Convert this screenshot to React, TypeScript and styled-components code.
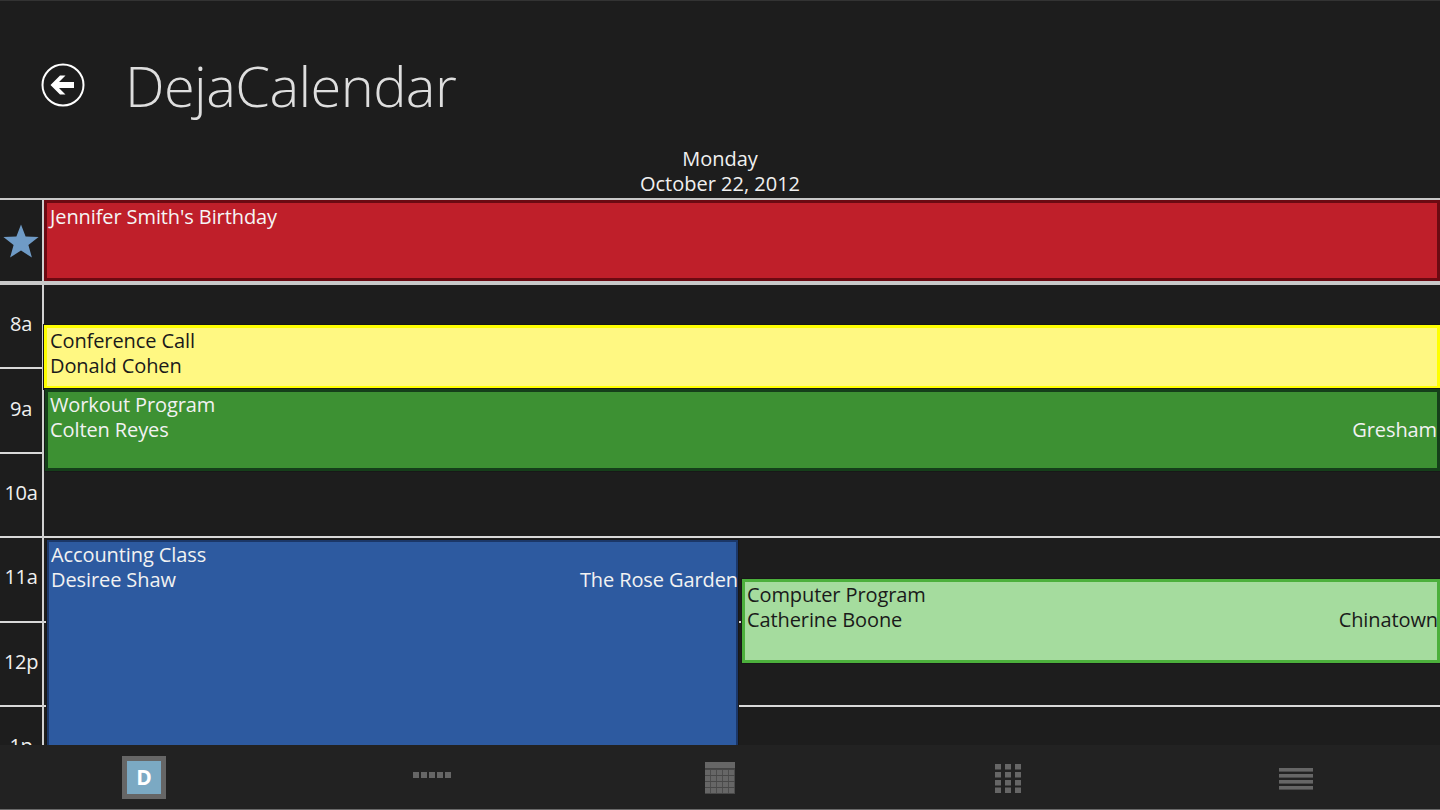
import styled, { createGlobalStyle } from 'styled-components';

const GlobalStyle = createGlobalStyle`
  html, body {
    margin: 0;
    padding: 0;
    background: #1d1d1d;
  }
  * {
    box-sizing: border-box;
  }
`;

const Page = styled.div`
  width: 1440px;
  height: 810px;
  display: flex;
  flex-direction: column;
  overflow: hidden;
  background: #1d1d1d;
  color: #f0f0f0;
  font-family: 'Open Sans', 'Noto Sans', sans-serif;
  border-top: 1px solid #333;
`;

const Header = styled.header`
  height: 144px;
  flex: none;
  display: flex;
  align-items: center;
  gap: 41px;
  padding: 24px 0 0 41px;
  margin-bottom: 1px;
`;

const BackButton = styled.div`
  width: 44px;
  height: 44px;
  color: #fff;
`;

const Title = styled.h1`
  margin: 0 0 0 -1px;
  font-size: 56px;
  font-weight: 300;
  line-height: 70px;
  color: #dedede;
  letter-spacing: -0.6px;
`;

const DateHeading = styled.div`
  height: 52px;
  flex: none;
  text-align: center;
  font-size: 20px;
  line-height: 25px;
  letter-spacing: 0;
  color: #f0f0f0;
`;

const AllDayRow = styled.section`
  height: 87px;
  flex: none;
  display: flex;
  border-top: 2px solid #c8c8c8;
  border-bottom: 4px solid #c8c8c8;
`;

const StarCell = styled.div`
  width: 44px;
  flex: none;
  display: flex;
  align-items: center;
  justify-content: center;
  border-right: 2px solid #d0d0d0;
`;

const AllDaySlot = styled.div`
  flex: 1;
  display: flex;
`;

const TimeGrid = styled.section`
  flex: 1;
  position: relative;
  overflow: hidden;
`;

const HourRow = styled.div`
  height: 84.4px;
  display: flex;
  border-bottom: 2px solid #d8d8d8;
`;

const HourLabel = styled.div`
  width: 44px;
  flex: none;
  display: flex;
  align-items: center;
  justify-content: center;
  border-right: 2px solid #d0d0d0;
  font-size: 20px;
  letter-spacing: -0.3px;
  padding-bottom: 7px;
  margin-bottom: -2px;
  color: #f0f0f0;
`;

const Event = styled.article<{ $bg: string; $edge: string; $ink: string; $weight?: number; $pad?: number }>`
  background: ${({ $bg }) => $bg};
  border: ${({ $weight }) => $weight ?? 3}px solid ${({ $edge }) => $edge};
  color: ${({ $ink }) => $ink};
  font-size: 20px;
  line-height: 25px;
  letter-spacing: -0.1px;
  padding: 0 0 0 ${({ $pad }) => $pad ?? 3}px;
  white-space: nowrap;
`;

const AllDayEvent = styled(Event)`
  flex: 1;
  padding-top: 1px;
`;

const TimedEvent = styled(Event)<{ $top: number; $left: number; $right: number; $height: number }>`
  position: absolute;
  top: ${({ $top }) => $top}px;
  left: ${({ $left }) => $left}px;
  right: ${({ $right }) => $right}px;
  height: ${({ $height }) => $height}px;
  box-shadow: 0 0 0 1px #181818;
`;

const DetailLine = styled.div<{ $bleed?: number }>`
  display: flex;
  justify-content: space-between;
  margin-right: ${({ $bleed }) => -($bleed ?? 0)}px;
`;

const Dock = styled.nav`
  height: 65px;
  flex: none;
  position: relative;
  display: grid;
  grid-template-columns: repeat(5, 1fr);
  align-items: center;
  justify-items: center;
  background: #222;
  border-bottom: 1px solid #6a6a6a;
`;

const DayTile = styled.div`
  width: 44px;
  height: 43px;
  display: flex;
  align-items: center;
  justify-content: center;
  background: #7ba9c3;
  border: 5px solid #666;
  color: #fff;
  font-size: 21px;
  font-weight: 700;
  line-height: 1;
`;

const DockIcon = styled.svg<{ $shift: number }>`
  display: block;
  fill: #666;
  margin-top: ${({ $shift }) => $shift}px;
`;

const events = [
  { title: 'Conference Call', who: 'Donald Cohen', place: '', top: 40, left: 44, right: 0, height: 64, bg: '#fff882', edge: '#ffff00', ink: '#1a1a1a' },
  { title: 'Workout Program', who: 'Colten Reyes', place: 'Gresham', top: 104, left: 45, right: 0, height: 82, bg: '#3d9133', edge: '#153f1a', ink: '#f2f2f2', pad: 2 },
  { title: 'Accounting Class', who: 'Desiree Shaw', place: 'The Rose Garden', top: 255, left: 47, right: 702, height: 207, bg: '#2d5aa0', edge: '#1b3768', ink: '#f2f2f2', weight: 2, pad: 2, bleed: 2 },
  { title: 'Computer Program', who: 'Catherine Boone', place: 'Chinatown', top: 294, left: 742, right: 0, height: 84, bg: '#a5dc9e', edge: '#4cb03c', ink: '#1a1a1a', pad: 2, bleed: 1 },
];

const hours = ['8a', '9a', '10a', '11a', '12p', '1p'];

function BackIcon() {
  return (
    <svg viewBox="0 0 44 44" width="44" height="44">
      <circle cx="22" cy="22" r="20.500" fill="none" stroke="currentColor" strokeWidth="2" />
      <path d="M9.500 22L19 12.500h5.500L18 19h15v6H18l6.500 6.500H19z" fill="currentColor" />
    </svg>
  );
}

function DotsIcon() {
  return (
    <DockIcon $shift={-4} width="38" height="6" viewBox="0 0 38 6">
      {[0, 8, 16, 24, 32].map((x) => (
        <rect key={x} x={x} y="0" width="6" height="6" />
      ))}
    </DockIcon>
  );
}

function MonthIcon() {
  const xs = [0, 6, 12, 18, 24];
  const ys = [8, 14, 20, 26];
  return (
    <DockIcon $shift={2} width="30" height="32" viewBox="0 0 30 32">
      <rect x="0" y="0" width="30" height="6.500" />
      <rect x="0" y="7" width="30" height="25" fill="#484848" />
      {ys.map((y) =>
        xs.map((x) => <rect key={`${x}-${y}`} x={x} y={y} width="5.200" height="5" />),
      )}
    </DockIcon>
  );
}

function YearIcon() {
  const xs = [0, 10, 20];
  const ys = [0, 8, 16, 23.500];
  return (
    <DockIcon $shift={3} width="26" height="29" viewBox="0 0 26 29">
      {ys.map((y) =>
        xs.map((x) => <rect key={`${x}-${y}`} x={x} y={y} width="6" height="5.500" />),
      )}
    </DockIcon>
  );
}

function ListIcon() {
  return (
    <DockIcon $shift={3} width="34" height="22" viewBox="0 0 34 22">
      {[0, 6, 12, 18].map((y) => (
        <rect key={y} x="0" y={y} width="34" height="3.600" />
      ))}
    </DockIcon>
  );
}

export default function App() {
  return (
    <Page>
      <GlobalStyle />
      <Header>
        <BackButton>
          <BackIcon />
        </BackButton>
        <Title>DejaCalendar</Title>
      </Header>
      <DateHeading>
        <div>Monday</div>
        <div>October 22, 2012</div>
      </DateHeading>
      <AllDayRow>
        <StarCell>
          <svg width="36" height="34" viewBox="0 0 36 34">
            <path d="M18 .5l4.600 12 13 .6-10.200 8 3.500 12.400L18 26.600 7.100 33.500l3.500-12.400L.4 13.100l13-.6z" fill="#6f9bc6" />
          </svg>
        </StarCell>
        <AllDaySlot>
          <AllDayEvent $bg="#bf1f2a" $edge="#6b0a12" $ink="#f5f5f5">
            Jennifer Smith's Birthday
          </AllDayEvent>
        </AllDaySlot>
      </AllDayRow>
      <TimeGrid>
        {hours.map((h) => (
          <HourRow key={h}>
            <HourLabel>{h}</HourLabel>
          </HourRow>
        ))}
        {events.map((ev) => (
          <TimedEvent
            key={ev.title}
            $top={ev.top}
            $left={ev.left}
            $right={ev.right}
            $height={ev.height}
            $bg={ev.bg}
            $edge={ev.edge}
            $ink={ev.ink}
            $weight={ev.weight}
            $pad={ev.pad}
          >
            <div>{ev.title}</div>
            <DetailLine $bleed={ev.bleed}>
              <span>{ev.who}</span>
              <span>{ev.place}</span>
            </DetailLine>
          </TimedEvent>
        ))}
      </TimeGrid>
      <Dock>
        <DayTile>D</DayTile>
        <DotsIcon />
        <MonthIcon />
        <YearIcon />
        <ListIcon />
      </Dock>
    </Page>
  );
}
